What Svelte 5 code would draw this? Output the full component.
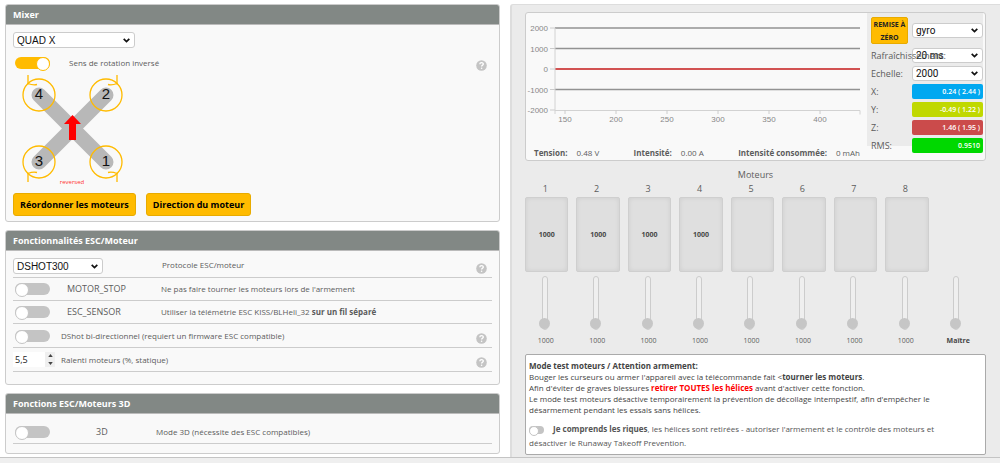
<script>
  let reversed = $state(true);
  let mixer = $state('QUAD X');
  let protocol = $state('DSHOT300');
  let motorStop = $state(false);
  let escSensor = $state(false);
  let bidir = $state(false);
  let idle = $state('5,5');
  let mode3d = $state(false);
  let understood = $state(false);
  let source = $state('gyro');
  let rate = $state('20 ms');
  let scale = $state('2000');
  let motors = $state([1000, 1000, 1000, 1000, 1000, 1000, 1000, 1000]);
  let master = $state(1000);

  const active = 4;
  const yTicks = [2000, 1000, 0, -1000, -2000];
  const xTicks = [150, 200, 250, 300, 350, 400];
  const readouts = [
    { label: 'X:', value: '0.24 ( 2.44 )', tone: 'blue' },
    { label: 'Y:', value: '-0.49 ( 1.22 )', tone: 'lime' },
    { label: 'Z:', value: '1.46 ( 1.95 )', tone: 'red' },
    { label: 'RMS:', value: '0.9510', tone: 'green' }
  ];
  const props = [
    { n: 4, x: 26, y: 22, sx: 1, sy: 1 },
    { n: 2, x: 93, y: 22, sx: -1, sy: 1 },
    { n: 3, x: 26, y: 89, sx: 1, sy: -1 },
    { n: 1, x: 93, y: 89, sx: -1, sy: -1 }
  ];

  function stepIdle(delta) {
    const value = parseFloat(idle.replace(',', '.')) + delta;
    idle = value.toFixed(1).replace('.', ',');
  }
</script>

{#snippet help()}
  <svg class="help" viewBox="0 0 11 11" aria-hidden="true">
    <circle cx="5.5" cy="5.5" r="5.3" fill="#c4c4c4" />
    <path d="M3.8 4.3c0-2.3 3.5-2.2 3.5-.2 0 1.2-1.7 1.3-1.7 2.5" fill="none" stroke="#fff" stroke-width="1.3" />
    <circle cx="5.6" cy="8.3" r=".8" fill="#fff" />
  </svg>
{/snippet}

<div class="page">
  <main>
    <div class="left">
      <section class="panel">
        <h2>Mixer</h2>
        <div class="body">
          <select class="wide" aria-label="Mixer" bind:value={mixer}>
            <option>QUAD X</option>
            <option>QUAD +</option>
          </select>
          <div class="row reverse">
            <input id="rev" class="switch" type="checkbox" bind:checked={reversed} />
            <label for="rev">Sens de rotation inversé</label>
            {@render help()}
          </div>
          <svg class="quad" viewBox="0 0 118 116" role="img" aria-label="Quad X">
            <path d="M26 22L93 89M93 22L26 89" stroke="#b8b8b8" stroke-width="15" stroke-linecap="round" />
            <path d="M59.500 42l8.500 9h-5v16h-7v-16h-5z" fill="#f00" />
            {#each props as p}
              <circle cx={p.x} cy={p.y} r="16" fill="none" stroke="#ffbb00" stroke-width="1.3" />
              <path
                d="M-11 -20V-10.500M-11 -11.500Q-6 -9.500 -2 -10.500"
                transform="translate({p.x} {p.y}) scale({p.sx} {p.sy})"
                fill="none" stroke="#ffbb00" stroke-width="1.3" />
              <text x={p.x} y={p.y + 4} class="num">{p.n}</text>
            {/each}
            <text x="59" y="111" class="rev">reversed</text>
          </svg>
          <div class="buttons">
            <button class="action">Réordonner les moteurs</button>
            <button class="action">Direction du moteur</button>
          </div>
        </div>
      </section>

      <section class="panel features">
        <h2>Fonctionnalités ESC/Moteur</h2>
        <div class="body">
          <div class="row line proto">
            <select id="proto" bind:value={protocol}>
              <option>DSHOT300</option>
              <option>DSHOT600</option>
            </select>
            <label for="proto">Protocole ESC/moteur</label>
            {@render help()}
          </div>
          <div class="row line feature">
            <input id="stop" class="switch" type="checkbox" bind:checked={motorStop} />
            <label class="name" for="stop">MOTOR_STOP</label>
            <span>Ne pas faire tourner les moteurs lors de l'armement</span>
          </div>
          <div class="row line feature">
            <input id="sensor" class="switch" type="checkbox" bind:checked={escSensor} />
            <label class="name" for="sensor">ESC_SENSOR</label>
            <span>Utiliser la télémétrie ESC KISS/BLHeli_32 <b>sur un fil séparé</b></span>
          </div>
          <div class="row line tall">
            <input id="bidir" class="switch" type="checkbox" bind:checked={bidir} />
            <label for="bidir">DShot bi-directionnel (requiert un firmware ESC compatible)</label>
            {@render help()}
          </div>
          <div class="row line tall">
            <div class="spin">
              <input id="idle" type="text" inputmode="decimal" bind:value={idle} />
              <div class="steps">
                <button aria-label="Augmenter" onclick={() => stepIdle(0.1)}>
                  <svg viewBox="0 0 6 4"><path d="M0 4L3 0l3 4z" fill="#444" /></svg>
                </button>
                <button aria-label="Diminuer" onclick={() => stepIdle(-0.1)}>
                  <svg viewBox="0 0 6 4"><path d="M0 0l3 4 3-4z" fill="#444" /></svg>
                </button>
              </div>
            </div>
            <label for="idle">Ralenti moteurs (%, statique)</label>
            {@render help()}
          </div>
        </div>
      </section>

      <section class="panel threed">
        <h2>Fonctions ESC/Moteurs 3D</h2>
        <div class="body">
          <div class="row line feature">
            <input id="m3d" class="switch" type="checkbox" bind:checked={mode3d} />
            <label class="name" for="m3d">3D</label>
            <span>Mode 3D (nécessite des ESC compatibles)</span>
          </div>
        </div>
      </section>
    </div>

    <div class="right">
      <section class="graph">
        <div class="plot">
          <svg class="chart" viewBox="0 0 341 126" role="img" aria-label="Gyro">
            {#each yTicks as t, i}
              {@const y = 15 + i * 20.5}
              <path d="M24 {y}h5" stroke="#ccc" />
              {#if t !== -2000}
                <path d="M29 {y}h305" stroke={t === 0 ? '#d25252' : '#929292'} stroke-width={t === 0 ? 2 : 1.4} />
              {/if}
              <text x="22" y={y + 3} text-anchor="end">{t}</text>
            {/each}
            <path d="M29 15v86M29 97.500h305v4" fill="none" stroke="#d2d2d2" />
            {#each xTicks as t, i}
              <path d="M{39 + i * 51} 97v4" stroke="#ccc" />
              <text x={39 + i * 51} y="109" text-anchor="middle">{t}</text>
            {/each}
          </svg>
          <div class="power">
            <span><b>Tension:</b>0.48 V</span>
            <span><b>Intensité:</b>0.00 A</span>
            <span><b>Intensité consommée:</b>0 mAh</span>
          </div>
        </div>
        <div class="side">
          <button class="reset">REMISE À ZÉRO</button>
          <select aria-label="Source" bind:value={source}>
            <option>gyro</option>
            <option>accel</option>
          </select>
          <label for="rate">Rafraîchissement:</label>
          <select id="rate" bind:value={rate}>
            <option>20 ms</option>
            <option>50 ms</option>
          </select>
          <label for="scale">Echelle:</label>
          <select id="scale" bind:value={scale}>
            <option>2000</option>
            <option>1000</option>
          </select>
          {#each readouts as r}
            <span>{r.label}</span>
            <output class={r.tone}>{r.value}</output>
          {/each}
        </div>
      </section>

      <section class="motors">
        <h3>Moteurs</h3>
        <div class="bank">
          {#each motors as _, i}
            <div class="motor">
              <label for="m{i}">{i + 1}</label>
              <div class="bar">{i < active ? motors[i] : ''}</div>
              <input id="m{i}" type="range" min="1000" max="2000" bind:value={motors[i]} />
              <span>{motors[i]}</span>
            </div>
          {/each}
          <div class="motor master">
            <input id="master" type="range" min="1000" max="2000" bind:value={master} />
            <label for="master">Maître</label>
          </div>
        </div>
      </section>

      <section class="notice">
        <p>
          <b>Mode test moteurs / Attention armement:</b><br />
          Bouger les curseurs ou armer l'appareil avec la télécommande fait &lt;<b>tourner les moteurs</b>.<br />
          Afin d'éviter de graves blessures <b class="danger">retirer TOUTES les hélices</b> avant d'activer cette fonction.<br />
          Le mode test moteurs désactive temporairement la prévention de décollage intempestif, afin d'empêcher le
          désarmement pendant les essais sans hélices.
        </p>
        <div class="agree">
          <input id="agree" class="switch small" type="checkbox" bind:checked={understood} />
          <label for="agree"><b>Je comprends les riques</b>, les hélices sont retirées - autoriser l'armement et le contrôle des moteurs et désactiver le Runaway Takeoff Prevention.</label>
        </div>
      </section>
    </div>
  </main>
  <footer></footer>
</div>

<style>
  :global(body) {
    margin: 0;
    background: #fff;
  }
  * {
    box-sizing: border-box;
  }
  .page {
    min-height: 100vh;
    display: flex;
    flex-direction: column;
    font: 8px/12px 'Open Sans', sans-serif;
    color: #5c5c5c;
  }
  main {
    flex: 1;
    display: grid;
    grid-template-columns: 495fr 490fr;
    gap: 10px;
    padding: 4px 0 0 5px;
  }
  footer {
    height: 6px;
    background: #efefef;
    border-top: 1px solid #c4c4c4;
  }
  .left {
    min-width: 0;
    display: flex;
    flex-direction: column;
    gap: 8px;
    padding-bottom: 3px;
  }
  .panel {
    border: 1px solid #ccc;
    border-radius: 3px;
    background: #f9f9f9;
  }
  h2 {
    margin: 0;
    padding: 0 7px;
    font-size: 9px;
    line-height: 19px;
    color: #fff;
    background: #828885;
    border-bottom: 1px solid #bbb;
    border-radius: 2px 2px 0 0;
  }
  .body {
    padding: 7px 7px 5px;
  }
  select {
    appearance: none;
    display: block;
    width: 90px;
    height: 16px;
    margin: 0;
    padding: 0 3px;
    border: 1px solid #ccc;
    border-radius: 3px;
    font: 10px 'Liberation Sans', sans-serif;
    color: #111;
    background: #fff url("data:image/svg+xml,%3Csvg xmlns='http://www.w3.org/2000/svg' width='7' height='5'%3E%3Cpath d='M.7.8l2.800 2.800L6.300.8' fill='none' stroke='%23111' stroke-width='1.700'/%3E%3C/svg%3E") no-repeat right 4px center;
  }
  select.wide {
    width: 122px;
  }
  .row {
    display: flex;
    align-items: center;
  }
  .help {
    width: 11px;
    height: 11px;
    margin: 6px 5px 0 auto;
    flex: none;
  }
  .switch {
    appearance: none;
    position: relative;
    flex: none;
    width: 35px;
    height: 12px;
    margin: 0 0 0 2px;
    border-radius: 6px;
    background: #c4c4c4;
  }
  .switch::before {
    content: '';
    position: absolute;
    left: 0;
    top: 0;
    width: 12px;
    height: 12px;
    border: 1px solid #c4c4c4;
    border-radius: 50%;
    background: #fff;
  }
  .switch:checked {
    background: #ffbb00;
  }
  .switch:checked::before {
    left: auto;
    right: 0;
    border-color: #ffbb00;
  }
  .reverse {
    height: 21px;
    margin-top: 4px;
  }
  .reverse label {
    margin-left: 19px;
  }
  .quad {
    display: block;
    width: 118px;
    height: 116px;
  }
  .num {
    font: 15px 'Liberation Sans', sans-serif;
    text-anchor: middle;
    fill: #111;
  }
  .rev {
    font-size: 6px;
    text-anchor: middle;
    fill: #f33;
  }
  .buttons {
    display: flex;
    gap: 10px;
    margin-top: 4px;
  }
  .action {
    height: 23px;
    padding: 0 6px;
    border: 1px solid #e8ab00;
    border-radius: 3px;
    background: #ffbb00;
    font: bold 9px 'Open Sans', sans-serif;
    color: #000;
  }
  .line {
    border-bottom: 1px solid #ccc;
    height: 23px;
  }
  .proto {
    height: 20px;
    align-items: flex-start;
  }
  .proto label {
    margin: 1px 0 0 59px;
  }
  .proto .help {
    margin-top: 5px;
  }
  .tall {
    height: 24px;
  }
  .tall .switch + label,
  .tall .spin + label {
    margin-left: 11px;
  }
  .feature .name {
    flex: none;
    width: 111px;
    padding-left: 17px;
    font-size: 9px;
  }
  .features .body {
    padding-bottom: 12px;
  }
  .threed .body {
    padding: 7px 7px 9px;
  }
  .threed .feature .name {
    width: 106px;
    padding-left: 46px;
  }
  .spin {
    display: flex;
    width: 42px;
    height: 15px;
    margin-right: -5px;
    background: #fff;
  }
  .spin input {
    width: 32px;
    border: 0;
    padding: 0 2px;
    background: none;
    font: 9px 'Open Sans', sans-serif;
    color: #222;
  }
  .steps {
    display: flex;
    flex-direction: column;
    width: 10px;
    background: #efefef;
  }
  .steps button {
    display: flex;
    flex: 1;
    align-items: center;
    justify-content: center;
    padding: 0;
    border: 0;
    background: none;
  }
  .steps svg {
    width: 5px;
    height: 3px;
  }
  .right {
    min-width: 0;
    padding: 7px 14px 1px 13px;
    border: solid #ddd;
    border-width: 1px 0 0 2px;
    border-radius: 3px 0 0 0;
    background: #ebebeb;
  }
  .graph {
    display: flex;
    height: 149px;
    border: 1px solid #ccc;
    border-radius: 3px;
    background: #f9f9f9;
  }
  .plot {
    flex: 1;
    min-width: 0;
  }
  .chart {
    display: block;
    width: 100%;
    height: 126px;
  }
  .chart text {
    font: 8px 'Liberation Sans', sans-serif;
    fill: #888;
  }
  .power {
    display: flex;
    justify-content: space-between;
    padding: 8px 7px 0 8px;
    white-space: nowrap;
  }
  .power b {
    margin-right: 9px;
  }
  .side {
    display: grid;
    grid-template-columns: 37px 71px;
    grid-template-rows: 30px;
    grid-auto-rows: 15px;
    gap: 3px 4px;
    align-items: center;
    height: 133px;
    width: 116px;
    margin-right: 2px;
    padding: 2px 0 0 4px;
    font-size: 9px;
    background: #ebebeb;
  }
  .side select {
    width: 71px;
    height: 15px;
    font-family: Roboto, sans-serif;
  }
  .side label {
    position: relative;
    white-space: nowrap;
    pointer-events: none;
  }
  .reset {
    height: 27px;
    padding: 0;
    border: 1px solid #e8ab00;
    border-radius: 2px;
    background: #ffbb00;
    font: bold 7px/13px 'Open Sans', sans-serif;
    color: #222;
  }
  output {
    height: 15px;
    padding-right: 3px;
    border-radius: 2px;
    font-size: 7px;
    font-weight: 600;
    line-height: 15px;
    text-align: right;
    color: #fff;
  }
  .blue { background: #00a8f0; }
  .lime { background: #c0d800; }
  .red { background: #cb4b4b; }
  .green { background: #00d800; }
  h3 {
    margin: 8px 0 0;
    font-size: 9px;
    font-weight: 400;
    line-height: 12px;
    text-align: center;
  }
  .bank {
    display: grid;
    grid-template-columns: repeat(9, 1fr);
    gap: 8px;
    padding-right: 6px;
  }
  .motor {
    display: flex;
    flex-direction: column;
    align-items: center;
    font-size: 7px;
  }
  .motor label {
    font-size: 9px;
    line-height: 16px;
    padding-right: 3px;
  }
  .bar {
    width: 100%;
    height: 75px;
    border: 1px solid #cfcfcf;
    border-radius: 2px;
    box-shadow: inset 0 0 4px #ccc;
    background: #dfdfdf;
    font-weight: 700;
    line-height: 73px;
    text-align: center;
    color: #474747;
  }
  input[type='range'] {
    appearance: none;
    writing-mode: vertical-lr;
    direction: rtl;
    width: 11px;
    height: 54px;
    margin: 4px 4px 5px 0;
    background: none;
  }
  input[type='range']::-webkit-slider-runnable-track {
    width: 6px;
    border: 1px solid #ccc;
    border-radius: 3px;
    background: #efefef;
  }
  input[type='range']::-webkit-slider-thumb {
    appearance: none;
    width: 11px;
    height: 11px;
    margin-left: -4px;
    border-radius: 50%;
    background: #c6c6c6;
  }
  .motor span {
    padding-right: 2px;
  }
  .master {
    justify-content: flex-end;
  }
  .motor.master label {
    padding: 0;
    font-size: 7px;
    font-weight: 700;
    line-height: 12px;
    color: #474747;
  }
  .notice {
    margin-top: 7px;
    padding: 5px 28px 4px 3px;
    border: 1px solid #aaa;
    border-radius: 2px;
    background: #fff;
    color: #444;
  }
  .notice p {
    margin: 0;
    line-height: 11px;
  }
  .danger {
    color: #f00;
  }
  .agree {
    margin-top: 7px;
    line-height: 14px;
    color: #555;
  }
  .switch.small {
    width: 15px;
    height: 8px;
    margin: 0 7px 0 0;
    vertical-align: -2px;
  }
  .switch.small::before {
    width: 8px;
    height: 8px;
  }
</style>
